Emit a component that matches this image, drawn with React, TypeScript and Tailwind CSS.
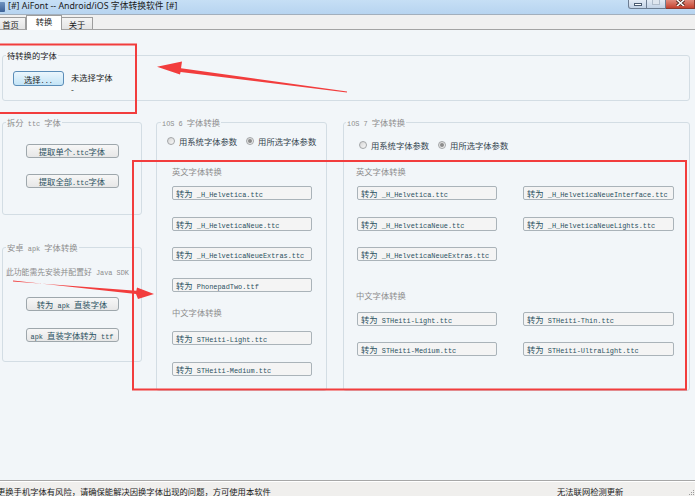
import React from "react";

const CJK = /([\u3000-\u303f\u4e00-\u9fff\uff00-\uffef]+)/;

// SimSun-style rendering: CJK at full width, latin runs in a small monospace
function Mixed({ text }: { text: string }) {
  return (
    <span>
      {text
        .split(CJK)
        .filter(Boolean)
        .map((part, i) =>
          CJK.test(part) ? (
            <span key={i}>{part}</span>
          ) : (
            <span key={i} className="font-['Liberation_Mono',monospace] text-[6.9px] leading-none">
              {part}
            </span>
          )
        )}
    </span>
  );
}

function Radio({ checked, label }: { checked?: boolean; label: string }) {
  return (
    <label className="flex items-center gap-[4px]">
      <span className="w-[8px] h-[8px] rounded-full border border-[#a3a5a7] bg-gradient-to-br from-[#d6d6d6] to-[#f9f9f9] flex items-center justify-center">
        {checked && <span className="w-[4px] h-[4px] rounded-full bg-[#8b8b8b]" />}
      </span>
      <span className="text-[#34444e]">{label}</span>
    </label>
  );
}

function FileBtn({ name }: { name: string }) {
  return (
    <div className="h-[14px] flex items-center pl-[3px] border border-[#aab3b9] rounded-[2px] bg-[#f4f4f4] text-[#2b5161] leading-[12px] whitespace-pre">
      <Mixed text={"转为 " + name} />
    </div>
  );
}

function PlainBtn({ label }: { label: string }) {
  return (
    <div className="w-[93px] h-[14px] mx-auto flex items-center justify-center border border-[#9ea7ac] rounded-[3px] bg-gradient-to-b from-[#f7f7f7] to-[#e7e7e7] text-[#2b5161] leading-[12px] whitespace-pre">
      <Mixed text={label} />
    </div>
  );
}

function Caption({ text }: { text: string }) {
  return <div className="text-[#8d8d8d] leading-[12px]">{text}</div>;
}

const ios6En = ["_H_Helvetica.ttc", "_H_HelveticaNeue.ttc", "_H_HelveticaNeueExtras.ttc", "PhonepadTwo.ttf"];
const ios6Cn = ["STHeiti-Light.ttc", "STHeiti-Medium.ttc"];
const ios7En = [
  "_H_Helvetica.ttc",
  "_H_HelveticaNeueInterface.ttc",
  "_H_HelveticaNeue.ttc",
  "_H_HelveticaNeueLights.ttc",
  "_H_HelveticaNeueExtras.ttc",
];
const ios7Cn = ["STHeiti-Light.ttc", "STHeiti-Thin.ttc", "STHeiti-Medium.ttc", "STHeiti-UltraLight.ttc"];

export default function App() {
  return (
    <div className="w-[695px] h-[496px] relative overflow-hidden flex flex-col bg-[#f2f6f9] font-['Noto_Sans_CJK_SC',sans-serif] text-[8.3px] leading-[12px] text-[#1b1b1b]">
      {/* title bar */}
      <div className="h-[15px] shrink-0 flex items-start border-b border-[#a2afbd] bg-gradient-to-b from-[#c6dff5] to-[#b7d4f0]">
        <div className="w-[5px] h-[10px] mt-[2px] rounded-r-[1px] bg-gradient-to-b from-[#6f93c0] to-[#3d6298]" />
        <span className="ml-[3px] mt-[1px] text-[8.8px] leading-[11px] font-['Noto_Sans','Noto_Sans_CJK_SC',sans-serif] text-[#1a1a1a] whitespace-nowrap">
          [#] AiFont -- Android/iOS 字体转换软件 [#]
        </span>
        <div className="ml-auto flex">
          <div className="w-[19px] h-[9px] border border-t-0 border-[#6d7d92] rounded-bl-[3px] bg-gradient-to-b from-[#e4ecf6] to-[#c2d2e5] flex items-end justify-center pb-[2px]">
            <div className="w-[8px] h-[3px] bg-white border border-[#4b5b70]" />
          </div>
          <div className="w-[19px] h-[9px] border border-t-0 border-l-0 border-[#6d7d92] bg-gradient-to-b from-[#e4ecf6] to-[#c2d2e5] flex items-start justify-center">
            <div className="w-[8px] h-[5px] border border-t-0 border-[#b0bccb] bg-[#dfe6ef]" />
          </div>
          <div className="w-[29px] h-[9px] border border-t-0 border-l-0 border-[#8c3a30] bg-gradient-to-b from-[#e08a7c] to-[#c4412f] flex items-start justify-center">
            <svg width="9" height="6" viewBox="0 0 9 6">
              <path d="M1 0 L8 6 M8 0 L1 6" stroke="#3b1a14" strokeWidth="3" />
              <path d="M1 0 L8 6 M8 0 L1 6" stroke="#ffffff" strokeWidth="1.6" />
            </svg>
          </div>
        </div>
      </div>

      {/* tabs */}
      <div className="h-[15px] shrink-0 flex items-end bg-[#f0f0f0] border-b border-[#a3a3a3]">
        <div className="ml-[-5px] w-[31px] h-[12px] flex items-center justify-center border border-b-0 border-[#9d9d9d] bg-gradient-to-b from-[#f4f4f4] to-[#e4e4e4] leading-[10px]">
          首页
        </div>
        <div className="relative z-10 w-[36px] h-[15px] mb-[-1px] flex items-start justify-center border border-b-0 border-[#9d9d9d] bg-white leading-[10px]">
          转换
        </div>
        <div className="w-[31px] h-[12px] flex items-center justify-center border border-b-0 border-l-0 border-[#9d9d9d] bg-gradient-to-b from-[#f4f4f4] to-[#e4e4e4] leading-[10px]">
          关于
        </div>
      </div>

      {/* content */}
      <div className="flex-1 pt-[19px] pl-[2px]">
        <fieldset className="w-[688px] border border-[#d3dde4] rounded-[3px]">
          <legend className="ml-[3px] px-[1px] leading-[12px]">待转换的字体</legend>
          <div className="flex items-start gap-[7px] pl-[10px] pt-[10px] pb-[5px]">
            <div className="w-[51px] h-[15px] flex items-center justify-center border border-[#5b8db8] rounded-[3px] bg-gradient-to-b from-[#ebf6fd] to-[#c3e4f6] leading-[12px]">
              <Mixed text="选择..." />
            </div>
            <div className="flex flex-col">
              <span>未选择字体</span>
              <span>-</span>
            </div>
          </div>
        </fieldset>

        <div className="flex items-start mt-[15px]">
          {/* left column */}
          <div className="w-[140px] flex flex-col">
            <fieldset className="border border-[#d3dde4] rounded-[3px]">
              <legend className="ml-[3px] px-[1px] leading-[12px] text-[#8d8d8d] whitespace-pre">
                <Mixed text="拆分 ttc 字体" />
              </legend>
              <div className="flex flex-col gap-[16px] pt-[16px] pb-[26px]">
                <PlainBtn label="提取单个.ttc字体" />
                <PlainBtn label="提取全部.ttc字体" />
              </div>
            </fieldset>
            <fieldset className="mt-[26px] border border-[#d3dde4] rounded-[3px]">
              <legend className="ml-[3px] px-[1px] leading-[12px] text-[#8d8d8d] whitespace-pre">
                <Mixed text="安卓 apk 字体转换" />
              </legend>
              <div className="flex flex-col pt-[13px] pb-[19px]">
                <div className="pl-[3px] text-[7.8px] text-[#8d8d8d] whitespace-pre">
                  <Mixed text="此功能需先安装并配置好 Java SDK" />
                </div>
                <div className="mt-[19px]">
                  <PlainBtn label="转为 apk 直装字体" />
                </div>
                <div className="mt-[17px]">
                  <PlainBtn label="apk 直装字体转为 ttf" />
                </div>
              </div>
            </fieldset>
          </div>

          {/* iOS 6 */}
          <fieldset className="ml-[14px] w-[171px] h-[275px] border border-[#d3dde4] rounded-[3px]">
            <legend className="ml-[4px] px-[1px] leading-[12px] text-[#8d8d8d] whitespace-pre">
              <Mixed text="iOS 6 字体转换" />
            </legend>
            <div className="flex gap-[9px] pl-[10px] mt-[7px] whitespace-nowrap">
              <Radio label="用系统字体参数" />
              <Radio checked label="用所选字体参数" />
            </div>
            <div className="pl-[15px] pr-[14px] flex flex-col">
              <div className="mt-[18px]">
                <Caption text="英文字体转换" />
              </div>
              <div className="mt-[9px] flex flex-col gap-[16.5px]">
                {ios6En.map((n) => (
                  <FileBtn key={n} name={n} />
                ))}
              </div>
              <div className="mt-[14px]">
                <Caption text="中文字体转换" />
              </div>
              <div className="mt-[13px] flex flex-col gap-[17px]">
                {ios6Cn.map((n) => (
                  <FileBtn key={n} name={n} />
                ))}
              </div>
            </div>
          </fieldset>

          {/* iOS 7 */}
          <fieldset className="ml-[16px] w-[347px] h-[275px] border border-[#d3dde4] rounded-[3px]">
            <legend className="ml-[2px] px-[1px] leading-[12px] text-[#8d8d8d] whitespace-pre">
              <Mixed text="iOS 7 字体转换" />
            </legend>
            <div className="flex gap-[9px] pl-[15px] mt-[11px] whitespace-nowrap">
              <Radio label="用系统字体参数" />
              <Radio checked label="用所选字体参数" />
            </div>
            <div className="pl-[12px] mt-[14px]">
              <Caption text="英文字体转换" />
            </div>
            <div className="pl-[13px] mt-[9px] grid grid-cols-[140px_151px] gap-x-[26px] gap-y-[16.5px]">
              {ios7En.map((n) => (
                <FileBtn key={n} name={n} />
              ))}
            </div>
            <div className="pl-[12px] mt-[28px]">
              <Caption text="中文字体转换" />
            </div>
            <div className="pl-[13px] mt-[11px] grid grid-cols-[140px_151px] gap-x-[26px] gap-y-[16px]">
              {ios7Cn.map((n) => (
                <FileBtn key={n} name={n} />
              ))}
            </div>
          </fieldset>
        </div>
      </div>

      {/* status bar */}
      <div className="h-[16px] shrink-0 flex items-start border-t border-[#a7a7a7] bg-[#f0efed] shadow-[inset_0_1px_0_#ffffff] leading-[10px]">
        <span className="ml-[-3px] w-[560px] pt-[5px] whitespace-nowrap">
          更换手机字体有风险，请确保能解决因换字体出现的问题，方可使用本软件
        </span>
        <span className="pt-[5px] whitespace-nowrap">无法联网检测更新</span>
        <svg className="ml-auto mt-[8px]" width="6" height="7" viewBox="0 0 6 7">
          <rect x="4" y="1" width="1" height="1" fill="#9a9a9a" />
          <rect x="2" y="3" width="1" height="1" fill="#9a9a9a" />
          <rect x="4" y="3" width="1" height="1" fill="#9a9a9a" />
          <rect x="0" y="5" width="1" height="1" fill="#9a9a9a" />
          <rect x="2" y="5" width="1" height="1" fill="#9a9a9a" />
          <rect x="4" y="5" width="1" height="1" fill="#9a9a9a" />
        </svg>
      </div>

      {/* red annotation marks drawn over the screenshot */}
      <svg className="absolute inset-0 pointer-events-none" width="695" height="496" viewBox="0 0 695 496">
        <rect x="-2" y="44.5" width="138" height="68.5" fill="none" stroke="#f23d3d" strokeWidth="2" />
        <rect x="133" y="161" width="553" height="228.5" fill="none" stroke="#f23d3d" strokeWidth="2" />
        <polygon
          points="347.1,91.5 181,68.3 182,61.5 157,66.8 180,74.5 180.6,71.9 346.9,92.5"
          fill="#f23d3d"
        />
        <polygon
          points="13,281.4 136.3,290.7 137,287.5 154,294 138,299 136,293.9 13,280.6"
          fill="#f23d3d"
        />
      </svg>
    </div>
  );
}
